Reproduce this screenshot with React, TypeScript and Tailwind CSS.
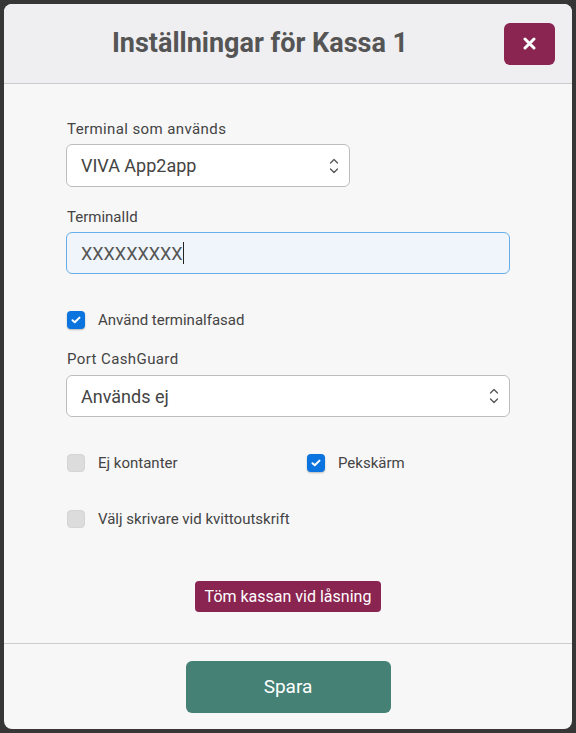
import React from 'react';

function Chevrons() {
  return (
    <svg width="10" height="18" viewBox="0 0 10 18" fill="none" stroke="#555" strokeWidth={1.3} strokeLinecap="round" strokeLinejoin="round">
      <path d="M1.5 6L5 2.5L8.5 6" />
      <path d="M1.5 12L5 15.5L8.5 12" />
    </svg>
  );
}

function Checkbox({ checked, label }: { checked: boolean; label: string }) {
  return (
    <label className="flex items-center h-[20px]">
      <span
        className={
          checked
            ? 'w-[18px] h-[18px] rounded-[4px] bg-[#0b74de] flex items-center justify-center shadow-[0_1px_2px_rgba(0,0,0,0.25)]'
            : 'w-[18px] h-[18px] rounded-[4px] bg-[#dcdcdc] border border-[#d4d4d4]'
        }
      >
        {checked && (
          <svg width="10" height="8" viewBox="0 0 10 8" fill="none" stroke="white" strokeWidth={2} strokeLinecap="round" strokeLinejoin="round">
            <path d="M1.5 4.2L3.8 6.3L8.5 1.6" />
          </svg>
        )}
      </span>
      <span className="ml-[13px] text-[15px] leading-[20px] text-[#444]">{label}</span>
    </label>
  );
}

function Select({ value, className }: { value: string; className: string }) {
  return (
    <div className={`h-[42px] bg-white border border-[#bdbdbd] rounded-[6px] flex items-center justify-between pl-[14px] pr-[10px] ${className}`}>
      <span className="text-[18px] text-[#444]">{value}</span>
      <Chevrons />
    </div>
  );
}

export default function App() {
  return (
    <div className="h-[733px] bg-[#363636] p-[4px] pb-[4px] font-['Roboto','Liberation_Sans',sans-serif]">
      <div className="w-[568px] h-[725px] rounded-[8px] overflow-hidden bg-[#f7f7f7] flex flex-col">
        <div className="h-[80px] shrink-0 bg-[#efeff1] border-b border-[#cccccc] flex items-center pl-[16px] pr-[17px]">
          <h2 className="flex-1 text-center text-[27px] font-bold text-[#555] mr-[4px]">Inställningar för Kassa 1</h2>
          <button className="w-[51px] h-[42px] rounded-[6px] bg-[#8a2450] flex items-center justify-center">
            <svg width="13" height="13" viewBox="0 0 13 13" stroke="white" strokeWidth={3} strokeLinecap="round">
              <path d="M2 2L11 11M11 2L2 11" />
            </svg>
          </button>
        </div>

        <div className="flex-1 px-[62px] pt-[35px]">
          <div className="pl-[1px] text-[15px] leading-[20px] tracking-[0.4px] text-[#444]">Terminal som används</div>
          <Select value="VIVA App2app" className="mt-[5px] w-[284px] h-[43px]" />

          <div className="mt-[20px] pl-[1px] text-[15px] leading-[20px] text-[#444]">TerminalId</div>
          <div className="mt-[5px] h-[42px] border border-[#66afe9] bg-[#eff5fa] rounded-[6px] flex items-center pl-[14px]">
            <span className="text-[18px] text-[#555]">XXXXXXXXX</span>
            <span className="w-px h-[22px] bg-[#222]" />
          </div>

          <div className="mt-[36px] pl-[1px]">
            <Checkbox checked label="Använd terminalfasad" />
          </div>

          <div className="mt-[19px] pl-[1px] text-[15px] leading-[20px] tracking-[0.4px] text-[#444]">Port CashGuard</div>
          <Select value="Används ej" className="mt-[6px]" />

          <div className="mt-[36px] pl-[1px] grid grid-cols-[240px_1fr]">
            <Checkbox checked={false} label="Ej kontanter" />
            <Checkbox checked label="Pekskärm" />
          </div>

          <div className="mt-[36px] pl-[1px]">
            <Checkbox checked={false} label="Välj skrivare vid kvittoutskrift" />
          </div>

          <div className="mt-[52px] flex justify-center">
            <button className="h-[31px] px-[10px] rounded-[4px] bg-[#8a2450] text-white text-[16px]">Töm kassan vid låsning</button>
          </div>
        </div>

        <div className="h-[86px] shrink-0 border-t border-[#cccccc] flex justify-center pt-[17px]">
          <button className="w-[205px] h-[52px] rounded-[6px] bg-[#458275] text-white text-[19px]">Spara</button>
        </div>
      </div>
    </div>
  );
}
